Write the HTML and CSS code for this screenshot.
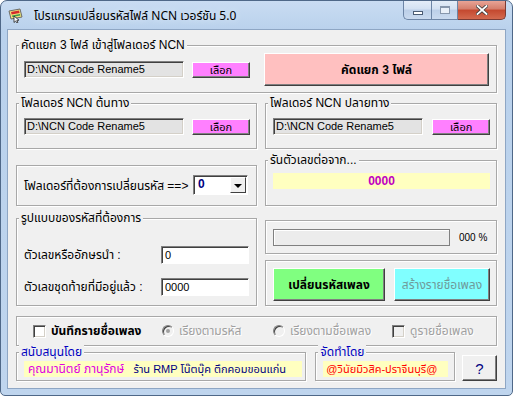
FILE: index.html
```html
<!DOCTYPE html>
<html lang="th">
<head>
  <meta charset="UTF-8"/>
  <title>โปรแกรมเปลี่ยนรหัสไฟล์ NCN เวอร์ชัน 5.0</title>
  <link rel="stylesheet" href="styles.css">
</head>
<body>
  <div class="window">
    <div class="titlebar">
      <span class="app-icon">
        <svg width="15" height="15" viewBox="0 0 15 15">
          <path d="M1 3 L12 1 L14 9 L3 11 Z" fill="#f4e27a" stroke="#6b6b6b" stroke-width="1"/>
          <path d="M3 4 L11 2.6 L11.6 5 L3.6 6.4 Z" fill="#d42b2b"/>
          <path d="M4 7.5 L12 6 L12.4 7.6 L4.4 9.1 Z" fill="#3aa04a"/>
          <path d="M6 8 L6 14.5 L7.6 13 L9 15 L10 14.4 L8.8 12.4 L11 12.2 Z" fill="#fff" stroke="#222" stroke-width="0.8"/>
        </svg>
      </span>
      <span class="title">โปรแกรมเปลี่ยนรหัสไฟล์ NCN เวอร์ชัน 5.0</span>
      <div class="caption-btns">
        <span class="cap-btn cap-min"><i></i></span>
        <span class="cap-btn cap-max"><i></i></span>
        <span class="cap-btn cap-close">
          <svg width="12" height="10" viewBox="0 0 12 10">
            <path d="M1.5 1 L10.5 9 M10.5 1 L1.5 9" stroke="#3b3b3b" stroke-width="3.4" stroke-linecap="square"/>
            <path d="M1.5 1 L10.5 9 M10.5 1 L1.5 9" stroke="#fff" stroke-width="1.8" stroke-linecap="square"/>
          </svg>
        </span>
      </div>
    </div>

    <div class="client">
      <!-- row 1 -->
      <div class="group g-split">
        <div class="legend">คัดแยก 3 ไฟล์ เข้าสู่โฟลเดอร์ NCN</div>
        <div class="group-row">
          <div class="path">D:\NCN Code Rename5</div>
          <button class="btn btn-pick">เลือก</button>
          <button class="btn btn-split">คัดแยก 3 ไฟล์</button>
        </div>
      </div>

      <!-- row 2 -->
      <div class="row">
        <div class="group g-left g-folder">
          <div class="legend">โฟลเดอร์ NCN ต้นทาง</div>
          <div class="group-row">
            <div class="path">D:\NCN Code Rename5</div>
            <button class="btn btn-pick">เลือก</button>
          </div>
        </div>
        <div class="group g-right g-folder">
          <div class="legend">โฟลเดอร์ NCN ปลายทาง</div>
          <div class="group-row">
            <div class="path path-short">D:\NCN Code Rename5</div>
            <button class="btn btn-pick">เลือก</button>
          </div>
        </div>
      </div>

      <!-- row 3 -->
      <div class="row row-bottom">
        <div class="group g-left g-target">
          <span class="label">โฟลเดอร์ที่ต้องการเปลี่ยนรหัส ==&gt;</span>
          <div class="combo">
            <span class="combo-value">0</span>
            <span class="combo-arrow"></span>
          </div>
        </div>
        <div class="group g-right g-run">
          <div class="legend">รันตัวเลขต่อจาก...</div>
          <div class="run-value">0000</div>
        </div>
      </div>

      <!-- row 4 -->
      <div class="row row-top">
        <div class="group g-left g-format">
          <div class="legend">รูปแบบของรหัสที่ต้องการ</div>
          <div class="field-row">
            <span class="label">ตัวเลขหรืออักษรนำ :</span>
            <div class="input">0</div>
          </div>
          <div class="field-row">
            <span class="label">ตัวเลขชุดท้ายที่มีอยู่แล้ว :</span>
            <div class="input">0000</div>
          </div>
        </div>
        <div class="col-right">
          <div class="group g-progress">
            <div class="progress"></div>
            <span class="percent">000 %</span>
          </div>
          <div class="group g-actions">
            <button class="btn btn-change">เปลี่ยนรหัสเพลง</button>
            <button class="btn btn-list">สร้างรายชื่อเพลง</button>
          </div>
        </div>
      </div>

      <!-- row 5 -->
      <div class="group g-options">
        <label class="opt opt-save"><span class="check"></span><span class="opt-bold">บันทึกรายชื่อเพลง</span></label>
        <label class="opt opt-off opt-code"><span class="radio radio-on"></span>เรียงตามรหัส</label>
        <label class="opt opt-off opt-name"><span class="radio"></span>เรียงตามชื่อเพลง</label>
        <label class="opt opt-off opt-view"><span class="check check-off"></span>ดูรายชื่อเพลง</label>
      </div>

      <!-- row 6 -->
      <div class="row row-credit">
        <div class="group g-support">
          <div class="legend legend-blue">สนับสนุนโดย</div>
          <div class="credit-strip">
            <span class="sponsor-name">คุณมานิตย์ ภานุรักษ์</span>
            <span class="sponsor-shop">ร้าน RMP โน๊ตบุ๊ค ตึกคอมขอนแก่น</span>
          </div>
        </div>
        <div class="group g-author">
          <div class="legend legend-blue">จัดทำโดย</div>
          <div class="credit-strip author">@วินัยมิวสิค-ปราจีนบุรี@</div>
        </div>
        <button class="btn btn-help">?</button>
      </div>
    </div>
  </div>
</body>
</html>
```

FILE: styles.css
```css
/* Reset & Base */
*, *::before, *::after { margin:0; padding:0; box-sizing:border-box; }
html, body { width:513px; height:396px; overflow:hidden; }
body {
  font-family: "Liberation Sans", "Noto Sans Thai", "Noto Sans", sans-serif;
  font-size: 12px;
  color: #000;
  background: #fff;
}
button { font: inherit; cursor: default; }

/* Window frame */
.window {
  width: 513px;
  height: 396px;
  background: linear-gradient(#c9dcf2, #b9d1ec 30px, #bfd5ee);
  border: 1px solid #4f6888;
  border-radius: 7px 7px 5px 5px;
  padding: 0 7px 7px;
  display: flex;
  flex-direction: column;
}
.titlebar {
  height: 29px;
  display: flex;
  align-items: flex-start;
}
.app-icon {
  width: 15px;
  height: 15px;
  margin-top: 7px;
  display: flex;
}
.title {
  margin: 7px 0 0 11px;
  font-family: "Noto Sans", "Noto Sans Thai", sans-serif;
  font-size: 12px;
  line-height: 15px;
  color: #000;
  text-shadow: 0 0 6px #e6f0fb;
}
.caption-btns {
  margin-left: auto;
  margin-right: -1px;
  display: flex;
}
.cap-btn {
  height: 19px;
  display: flex;
  align-items: center;
  justify-content: center;
  border: 1px solid #6d85a6;
  border-top: none;
}
.cap-min, .cap-max {
  width: 27px;
  background: linear-gradient(#e4edf8, #d3e1f2 45%, #bccfe8 50%, #c9daef);
}
.cap-min { width: 28px; border-radius: 0 0 0 5px; border-right: none; }
.cap-max { width: 27px; }
.cap-min i {
  width: 10px;
  height: 4px;
  margin-top: 5px;
  background: #fff;
  border: 1px solid #4b5c74;
}
.cap-max i {
  width: 10px;
  height: 8px;
  border: 1px solid #8797ad;
  border-top-width: 2px;
  background: #e9f0f9;
}
.cap-close {
  width: 48px;
  border-left: none;
  border-color: #7b3b34;
  border-radius: 0 0 5px 0;
  background: linear-gradient(#e8a496, #d47d6b 45%, #c4482f 50%, #d36a4f);
}

/* Client area */
.client {
  flex: 1;
  background: #f0f0f0;
  box-shadow: 0 0 0 1px #8ea6c4;
  padding: 15px 8px 0;
  display: flex;
  flex-direction: column;
}
.row { display: flex; gap: 8px; margin-top: 10px; }
.row-bottom { align-items: flex-end; margin-top: 11px; }
.row-top { align-items: flex-start; margin-top: 12px; }
.row-credit { align-items: flex-start; margin-top: 6px; gap: 9px; }

/* Group boxes */
.group {
  border: 1px solid #a8a8a8;
  box-shadow: inset 1px 1px 0 #fff, 1px 1px 0 #fff;
  padding: 0 6px 0 7px;
}
.legend {
  width: fit-content;
  height: 14px;
  line-height: 14px;
  margin: -8px 0 0 -5px;
  padding: 0 2px;
  background: #f0f0f0;
  white-space: nowrap;
}
.legend-blue { color: #0000c0; }
.group-row { display: flex; align-items: center; }

.g-split { height: 48px; }
.g-split .group-row { height: 33px; margin-top: 1px; }
.g-left { width: 241px; }
.g-right { width: 232px; }
.g-folder { height: 46px; }
.g-folder .group-row { margin-top: 8px; }

.path {
  width: 160px;
  height: 17px;
  padding: 1px 2px;
  font-size: 11px;
  line-height: 13px;
  background: #e3e3e3;
  border: 1px solid;
  border-color: #808080 #fff #fff #808080;
  box-shadow: inset 1px 1px 0 #404040, inset -1px -1px 0 #d4d0c8;
  white-space: nowrap;
  overflow: hidden;
}
.path-short { width: 151px; }

.btn {
  border: 1px solid;
  border-color: #fff #404040 #404040 #fff;
  box-shadow: inset -1px -1px 0 #808080;
  background: #f0f0f0;
  color: #000;
}
.btn-pick {
  width: 58px;
  height: 16px;
  margin-left: 8px;
  background: #ff80ff;
  font-size: 11px;
  line-height: 12px;
}
.g-right .btn-pick { margin-left: 9px; }
.btn-split {
  width: 225px;
  height: 33px;
  margin-left: 14px;
  background: #ffc0c0;
  font-weight: bold;
  font-size: 12px;
}

/* Row 3 */
.g-target {
  height: 41px;
  display: flex;
  align-items: center;
}
.label { white-space: nowrap; }
.combo {
  width: 55px;
  height: 20px;
  margin-left: auto;
  margin-right: 2px;
  margin-top: -1px;
  display: flex;
  background: #fff;
  border: 1px solid;
  border-color: #808080 #fff #fff #808080;
  box-shadow: inset 1px 1px 0 #404040;
}
.combo-value {
  flex: 1;
  padding: 1px 0 0 4px;
  font-weight: bold;
  font-size: 12px;
  color: #00007f;
}
.combo-arrow {
  width: 16px;
  margin: 1px 1px 1px 0;
  background: #f0f0f0;
  border: 1px solid;
  border-color: #fff #404040 #404040 #fff;
  display: flex;
  align-items: center;
  justify-content: center;
}
.combo-arrow::after {
  content: "";
  border: 4px solid transparent;
  border-top: 4px solid #000;
  border-bottom: none;
  margin-top: 1px;
}
.g-run { height: 46px; }
.run-value {
  height: 16px;
  margin-top: 6px;
  background: #ffffc0;
  color: #c000c0;
  font-weight: bold;
  font-size: 12px;
  line-height: 16px;
  text-align: center;
}

/* Row 4 */
.g-format { height: 88px; }
.field-row {
  display: flex;
  align-items: center;
  justify-content: space-between;
  margin-top: 21px;
  padding-right: 1px;
}
.field-row + .field-row { margin-top: 14px; }
.input {
  width: 88px;
  height: 18px;
  padding: 2px 3px;
  font-size: 11px;
  line-height: 13px;
  background: #fff;
  border: 1px solid;
  border-color: #808080 #fff #fff #808080;
  box-shadow: inset 1px 1px 0 #404040;
}
.col-right {
  width: 232px;
  margin-top: 2px;
  display: flex;
  flex-direction: column;
  gap: 6px;
}
.g-progress {
  height: 34px;
  display: flex;
  align-items: flex-start;
  padding-top: 8px;
}
.progress {
  flex-shrink: 0;
  width: 177px;
  height: 17px;
  border: 1px solid #808080;
  background: #ececec;
  box-shadow: inset 1px 1px 0 #fff;
}
.percent {
  margin-left: 9px;
  font-size: 10px;
  line-height: 17px;
  white-space: nowrap;
}
.g-actions {
  height: 46px;
  display: flex;
  align-items: center;
  gap: 9px;
}
.btn-change {
  width: 112px;
  height: 33px;
  margin-top: 3px;
  background: #80ff80;
  font-weight: bold;
  font-size: 12px;
}
.btn-list {
  width: 96px;
  height: 33px;
  margin-top: 3px;
  background: #80ffff;
  color: #6f9a9a;
  font-size: 12px;
}

/* Row 5 */
.g-options {
  height: 30px;
  margin-top: 10px;
  display: flex;
  align-items: center;
  padding-left: 16px;
}
.opt {
  display: flex;
  align-items: center;
  gap: 5px;
  white-space: nowrap;
}
.opt-bold { font-weight: bold; font-size: 12px; }
.opt-save { width: 129px; }
.opt-code { width: 111px; }
.opt-name { width: 119px; }
.opt-off { color: #a0a0a0; text-shadow: 1px 1px 0 #fff; }
.check {
  width: 13px;
  height: 13px;
  background: #fff;
  border: 1px solid;
  border-color: #808080 #fff #fff #808080;
  box-shadow: inset 1px 1px 0 #404040, inset -1px -1px 0 #d4d0c8;
}
.check-off { background: #f0f0f0; }
.radio {
  width: 12px;
  height: 12px;
  border-radius: 50%;
  background: #f0f0f0;
  border: 1px solid;
  border-color: #808080 #fff #fff #808080;
  box-shadow: inset 1px 1px 0 #404040;
  display: flex;
  align-items: center;
  justify-content: center;
}
.radio-on::after {
  content: "";
  width: 4px;
  height: 4px;
  border-radius: 50%;
  background: #a0a0a0;
}

/* Row 6 */
.g-support { width: 291px; height: 29px; padding-right: 3px; }
.g-author { width: 140px; height: 29px; }
.credit-strip {
  height: 16px;
  margin-top: 2px;
  background: #ffffc0;
  line-height: 16px;
  white-space: nowrap;
  overflow: hidden;
}
.sponsor-name { color: #e000e0; padding-left: 4px; margin-right: 6px; }
.sponsor-shop { color: #000080; font-size: 11px; }
.author { color: #ff0000; padding-left: 3px; font-size: 11px; }
.btn-help {
  width: 35px;
  height: 26px;
  margin-top: 3px;
  margin-left: -2px;
  font-size: 15px;
  color: #000080;
}
```
